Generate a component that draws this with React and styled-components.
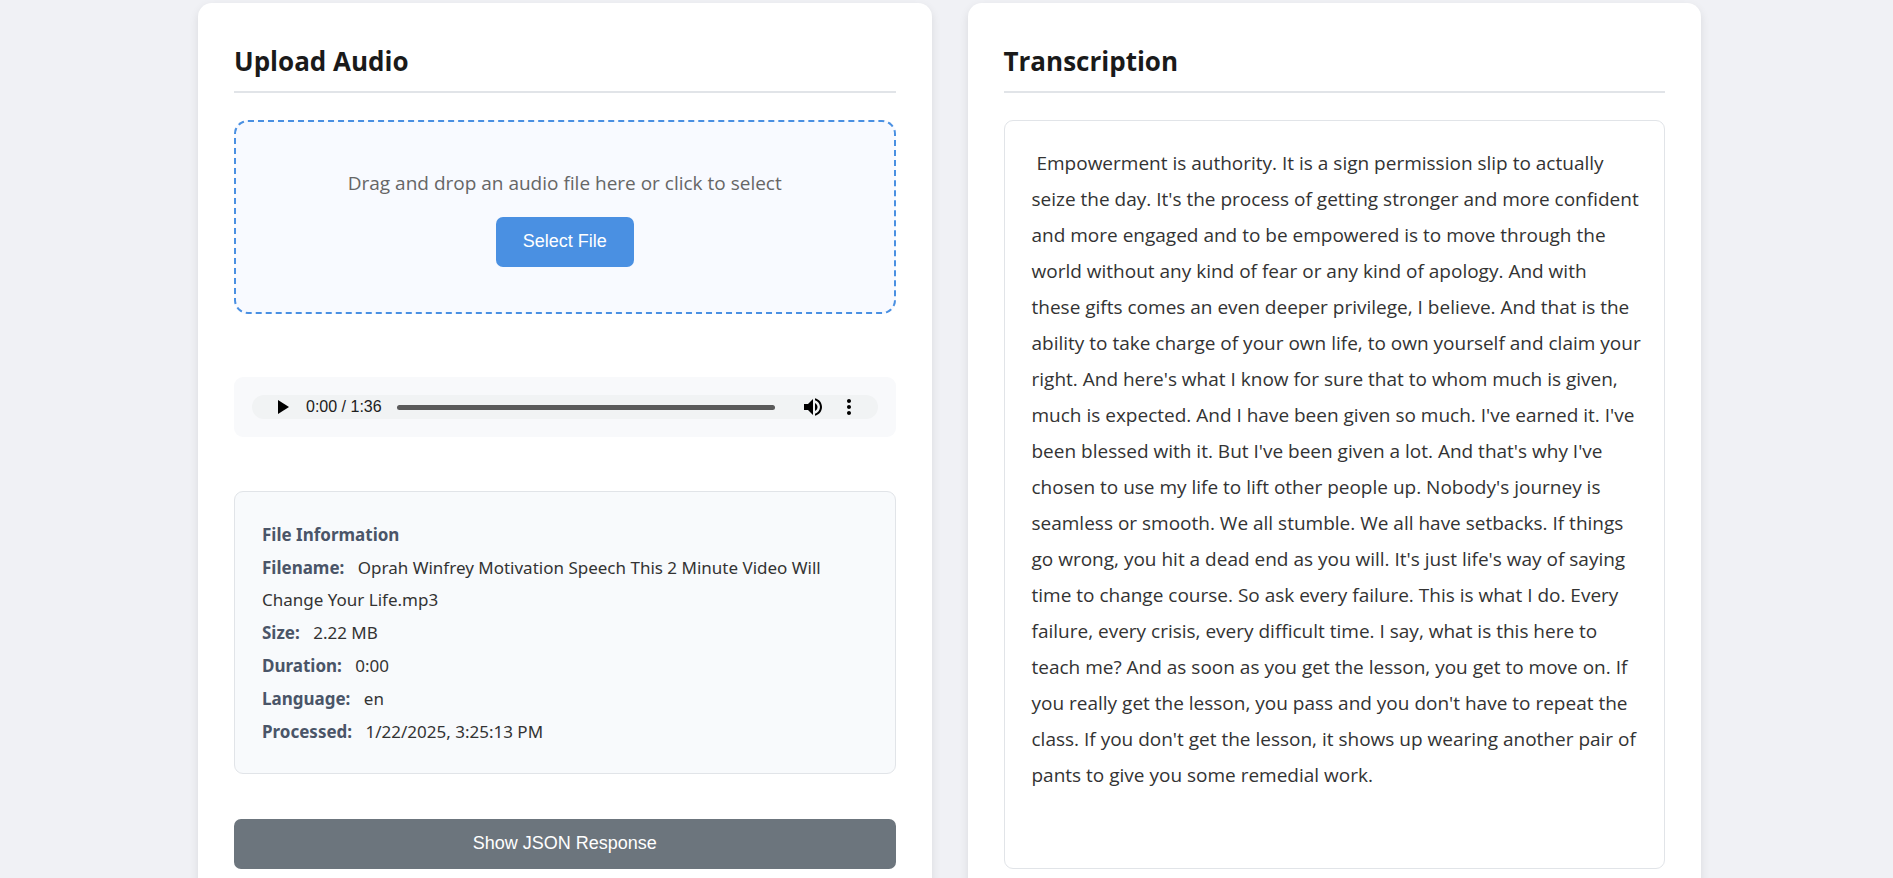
import React, { useState } from 'react';
import styled, { createGlobalStyle } from 'styled-components';

const GlobalStyle = createGlobalStyle`
  *, *::before, *::after { box-sizing: border-box; }
  body {
    margin: 0;
    background: #f0f1f5;
    color: #333333;
    font-family: 'Open Sans', 'Noto Sans', sans-serif;
    font-size: 19px;
  }
`;

const Page = styled.main`
  display: grid;
  grid-template-columns: minmax(0, 1fr) minmax(0, 1fr);
  gap: 36px;
  max-width: 1575px;
  margin: 0 auto;
  padding: 3px 33px 36px 39px;
`;

const Card = styled.section`
  display: flex;
  flex-direction: column;
  padding: 36px;
  background: #ffffff;
  border-radius: 14px;
  box-shadow: 0 4px 10px rgba(0, 0, 0, 0.1);
`;

const Title = styled.h2`
  margin: 0 0 27px;
  padding-bottom: 8px;
  border-bottom: 2px solid #e1e4e8;
  color: #1a1a1a;
  font-size: 26px;
  font-weight: 700;
  line-height: 44px;
`;

const DropZone = styled.div`
  display: flex;
  flex-direction: column;
  align-items: center;
  gap: 18px;
  padding: 45px;
  border: 2px dashed #4a90e2;
  border-radius: 14px;
  background: #f8faff;
`;

const Hint = styled.p`
  margin: 0;
  color: #666666;
  line-height: 32px;
`;

const Button = styled.button`
  width: ${({ $wide }) => ($wide ? '100%' : 'auto')};
  height: 50px;
  padding: 0 27px 1px;
  border: 0;
  border-radius: 7px;
  background: ${({ $tone }) => ($tone === 'primary' ? '#4a90e2' : '#6c757d')};
  color: #ffffff;
  font-family: 'Liberation Sans', Arial, sans-serif;
  font-size: 18px;
  cursor: pointer;
`;

const PlayerFrame = styled.div`
  margin: 63px 0 54px;
  padding: 18px;
  border-radius: 9px;
  background: #f8f9fb;
`;

const Player = styled.div`
  display: flex;
  align-items: center;
  gap: 12px;
  height: 24px;
  padding: 0 17px 0 18px;
  border-radius: 12px;
  background: #f1f3f4;
`;

const IconButton = styled.button`
  display: flex;
  padding: 0;
  border: 0;
  background: none;
  color: #000000;
  cursor: pointer;
`;

const Time = styled.span`
  color: #202020;
  font-family: 'Liberation Sans', Arial, sans-serif;
  font-size: 16px;
  line-height: 24px;
  white-space: nowrap;
`;

const Seek = styled.input`
  appearance: none;
  flex: 1;
  min-width: 0;
  height: 5px;
  margin: 0 14px 0 3px;
  border-radius: 3px;
  background: #5a5a5a;
  cursor: pointer;

  &::-webkit-slider-thumb {
    appearance: none;
    width: 1px;
    height: 5px;
    background: transparent;
  }
`;

const InfoBox = styled.div`
  margin-bottom: 45px;
  padding: 27px 27px 25px;
  border: 1px solid #e1e4e8;
  border-radius: 9px;
  background: #f8fafc;
  font-family: 'Noto Sans', 'Open Sans', sans-serif;
  font-size: 17px;
  line-height: 32px;
`;

const InfoHeading = styled.h3`
  margin: 0;
  color: #4a5568;
  font-size: 17px;
  font-weight: 700;
`;

const InfoRow = styled.p`
  margin: 1px 0 0;
`;

const Label = styled.strong`
  margin-right: 9px;
  color: #4a5568;
  font-weight: 700;
`;

const Transcript = styled.div`
  flex: 1;
  padding: 24px 20px 27px 27px;
  border: 1px solid #e1e4e8;
  border-radius: 9px;
  line-height: 36px;
  white-space: pre-wrap;
`;

const details = [
  ['Filename:', 'Oprah Winfrey Motivation Speech This 2 Minute Video Will Change Your Life.mp3'],
  ['Size:', '2.22 MB'],
  ['Duration:', '0:00'],
  ['Language:', 'en'],
  ['Processed:', '1/22/2025, 3:25:13 PM'],
];

const transcript = [
  ' Empowerment is authority. It is a sign permission slip to actually',
  "seize the day. It's the process of getting stronger and more confident",
  'and more engaged and to be empowered is to move through the',
  'world without any kind of fear or any kind of apology. And with',
  'these gifts comes an even deeper privilege, I believe. And that is the',
  'ability to take charge of your own life, to own yourself and claim your',
  "right. And here's what I know for sure that to whom much is given,",
  "much is expected. And I have been given so much. I've earned it. I've",
  "been blessed with it. But I've been given a lot. And that's why I've",
  "chosen to use my life to lift other people up. Nobody's journey is",
  'seamless or smooth. We all stumble. We all have setbacks. If things',
  "go wrong, you hit a dead end as you will. It's just life's way of saying",
  'time to change course. So ask every failure. This is what I do. Every',
  'failure, every crisis, every difficult time. I say, what is this here to',
  'teach me? And as soon as you get the lesson, you get to move on. If',
  "you really get the lesson, you pass and you don't have to repeat the",
  "class. If you don't get the lesson, it shows up wearing another pair of",
  'pants to give you some remedial work.',
].join('\n');

function Icon({ d }) {
  return (
    <svg width="24" height="24" viewBox="0 0 24 24" fill="currentColor" aria-hidden="true">
      <path d={d} />
    </svg>
  );
}

function AudioPlayer() {
  const [position, setPosition] = useState(0);
  const clock = `${Math.floor(position / 60)}:${String(position % 60).padStart(2, '0')}`;
  return (
    <PlayerFrame>
      <Player>
        <IconButton type="button" aria-label="Play">
          <Icon d="M8 5v14l11-7z" />
        </IconButton>
        <Time>{clock} / 1:36</Time>
        <Seek
          type="range"
          aria-label="Seek"
          min="0"
          max="96"
          value={position}
          onChange={(e) => setPosition(Number(e.target.value))}
        />
        <IconButton type="button" aria-label="Mute">
          <Icon d="M3 9v6h4l5 5V4L7 9H3zm13.5 3c0-1.77-1.02-3.29-2.5-4.03v8.05c1.48-.73 2.5-2.25 2.5-4.02zM14 3.23v2.06c2.89.86 5 3.54 5 6.71s-2.11 5.85-5 6.71v2.06c4.01-.91 7-4.49 7-8.77s-2.99-7.86-7-8.77z" />
        </IconButton>
        <IconButton type="button" aria-label="More options">
          <Icon d="M12 8c1.1 0 2-.9 2-2s-.9-2-2-2-2 .9-2 2 .9 2 2 2zm0 2c-1.1 0-2 .9-2 2s.9 2 2 2 2-.9 2-2-.9-2-2-2zm0 6c-1.1 0-2 .9-2 2s.9 2 2 2 2-.9 2-2-.9-2-2-2z" />
        </IconButton>
      </Player>
    </PlayerFrame>
  );
}

export default function App() {
  return (
    <>
      <GlobalStyle />
      <Page>
        <Card>
          <Title>Upload Audio</Title>
          <DropZone>
            <Hint>Drag and drop an audio file here or click to select</Hint>
            <Button type="button" $tone="primary">Select File</Button>
          </DropZone>
          <AudioPlayer />
          <InfoBox>
            <InfoHeading>File Information</InfoHeading>
            {details.map(([label, value]) => (
              <InfoRow key={label}>
                <Label>{label}</Label> {value}
              </InfoRow>
            ))}
          </InfoBox>
          <Button type="button" $wide>Show JSON Response</Button>
        </Card>
        <Card>
          <Title>Transcription</Title>
          <Transcript>{transcript}</Transcript>
        </Card>
      </Page>
    </>
  );
}
